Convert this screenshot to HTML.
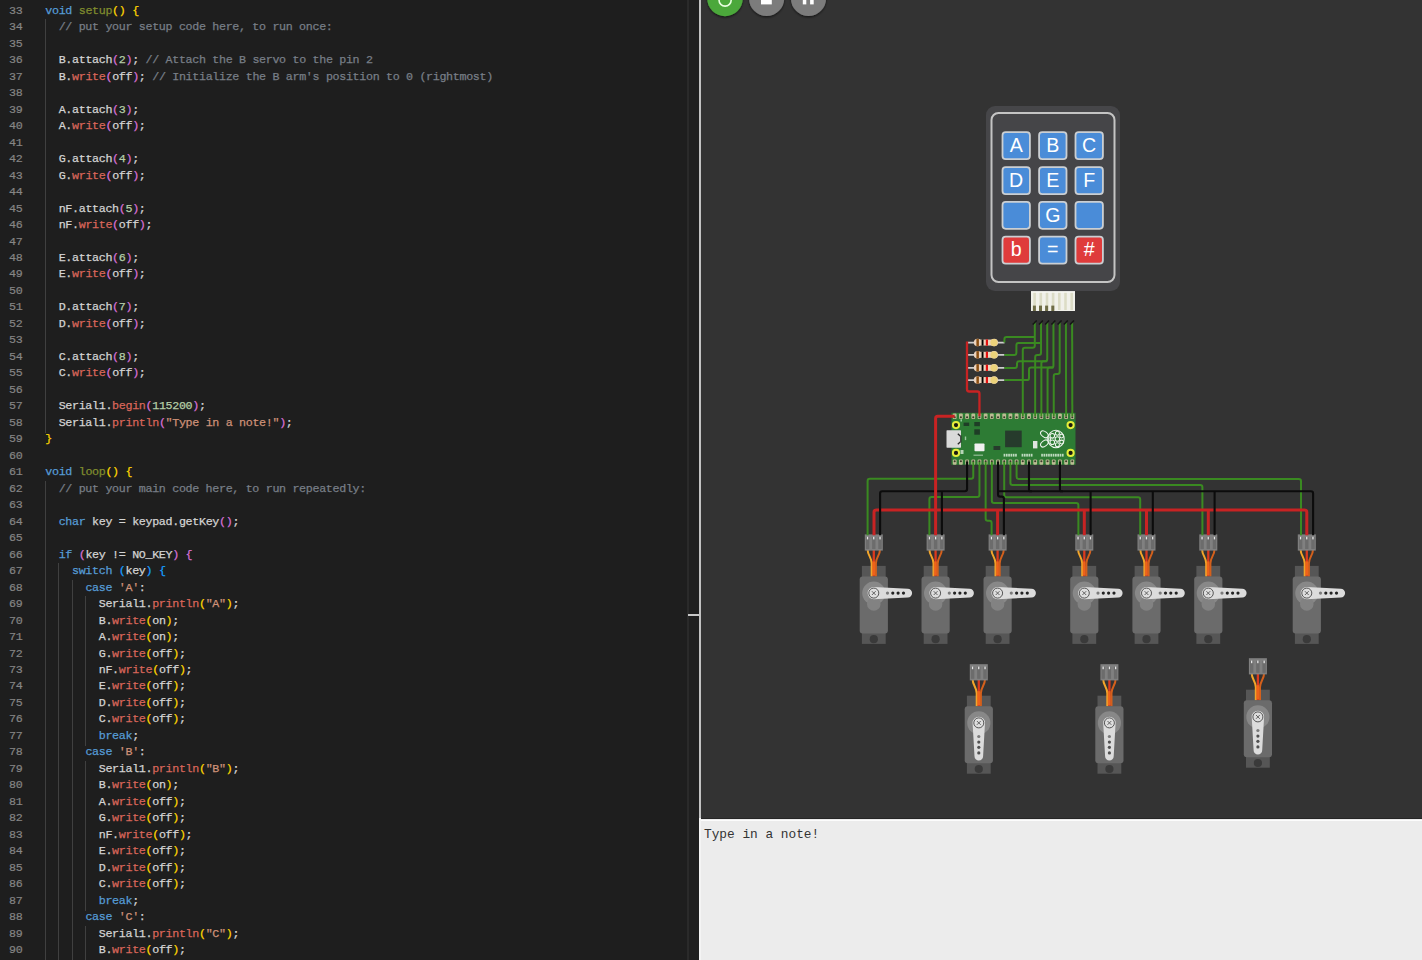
<!DOCTYPE html>
<html><head><meta charset="utf-8"><style>
html,body{margin:0;padding:0;width:1422px;height:960px;overflow:hidden;background:#1e1e1e;}
.ed{position:absolute;left:0;top:0;width:687px;height:960px;background:#1e1e1e;overflow:hidden;}
.ln{position:absolute;left:45.3px;height:16.48px;line-height:16.48px;white-space:pre;font-family:"Liberation Mono",monospace;font-size:11.7px;letter-spacing:-0.334px;color:#d4d4d4;-webkit-text-stroke:0.25px currentColor;}
.lnum{position:absolute;left:0;width:22.4px;text-align:right;height:16.48px;line-height:16.48px;font-family:"Liberation Mono",monospace;font-size:11.7px;letter-spacing:-0.334px;color:#858585;-webkit-text-stroke:0.2px currentColor;}
.gd{position:absolute;width:1px;height:18.48px;background:#404040;}
.sb1{position:absolute;left:687px;top:0;width:2px;height:960px;background:#2a2a2a;}
.sb2{position:absolute;left:689px;top:0;width:10px;height:960px;background:#1f1f1f;}
.tick{position:absolute;left:688px;top:613.5px;width:12px;height:2px;background:#c8c8c8;}
.div{position:absolute;left:699px;top:0;width:2px;height:960px;background:linear-gradient(#c2c2c2 0,#c2c2c2 818px,#f4f4f4 818px);}
.simbg{position:absolute;left:701px;top:0;width:721px;height:818px;background:#333333;}
.sim{position:absolute;left:701px;top:0;}
.serial{position:absolute;left:701px;top:818px;width:721px;height:142px;background:#ececec;border-top:1px solid #262626;box-sizing:border-box;}
.serial:before{content:'';position:absolute;left:0;top:0.5px;width:721px;height:1.6px;background:#fcfcfc;}
.stext{position:absolute;left:704px;top:827px;font-family:"Liberation Mono",monospace;font-size:12.8px;color:#333;white-space:pre;}
</style></head><body>
<div class="ed"><div class="gd" style="left:45px;top:19.28px"></div><div class="gd" style="left:45px;top:35.76px"></div><div class="gd" style="left:45px;top:52.24px"></div><div class="gd" style="left:45px;top:68.72px"></div><div class="gd" style="left:45px;top:85.20px"></div><div class="gd" style="left:45px;top:101.68px"></div><div class="gd" style="left:45px;top:118.16px"></div><div class="gd" style="left:45px;top:134.64px"></div><div class="gd" style="left:45px;top:151.12px"></div><div class="gd" style="left:45px;top:167.60px"></div><div class="gd" style="left:45px;top:184.08px"></div><div class="gd" style="left:45px;top:200.56px"></div><div class="gd" style="left:45px;top:217.04px"></div><div class="gd" style="left:45px;top:233.52px"></div><div class="gd" style="left:45px;top:250.00px"></div><div class="gd" style="left:45px;top:266.48px"></div><div class="gd" style="left:45px;top:282.96px"></div><div class="gd" style="left:45px;top:299.44px"></div><div class="gd" style="left:45px;top:315.92px"></div><div class="gd" style="left:45px;top:332.40px"></div><div class="gd" style="left:45px;top:348.88px"></div><div class="gd" style="left:45px;top:365.36px"></div><div class="gd" style="left:45px;top:381.84px"></div><div class="gd" style="left:45px;top:398.32px"></div><div class="gd" style="left:45px;top:414.80px"></div><div class="gd" style="left:45px;top:480.72px"></div><div class="gd" style="left:45px;top:497.20px"></div><div class="gd" style="left:45px;top:513.68px"></div><div class="gd" style="left:45px;top:530.16px"></div><div class="gd" style="left:45px;top:546.64px"></div><div class="gd" style="left:45px;top:563.12px"></div><div class="gd" style="left:58px;top:563.12px"></div><div class="gd" style="left:45px;top:579.60px"></div><div class="gd" style="left:58px;top:579.60px"></div><div class="gd" style="left:72px;top:579.60px"></div><div class="gd" style="left:45px;top:596.08px"></div><div class="gd" style="left:58px;top:596.08px"></div><div class="gd" style="left:72px;top:596.08px"></div><div class="gd" style="left:85px;top:596.08px"></div><div class="gd" style="left:45px;top:612.56px"></div><div class="gd" style="left:58px;top:612.56px"></div><div class="gd" style="left:72px;top:612.56px"></div><div class="gd" style="left:85px;top:612.56px"></div><div class="gd" style="left:45px;top:629.04px"></div><div class="gd" style="left:58px;top:629.04px"></div><div class="gd" style="left:72px;top:629.04px"></div><div class="gd" style="left:85px;top:629.04px"></div><div class="gd" style="left:45px;top:645.52px"></div><div class="gd" style="left:58px;top:645.52px"></div><div class="gd" style="left:72px;top:645.52px"></div><div class="gd" style="left:85px;top:645.52px"></div><div class="gd" style="left:45px;top:662.00px"></div><div class="gd" style="left:58px;top:662.00px"></div><div class="gd" style="left:72px;top:662.00px"></div><div class="gd" style="left:85px;top:662.00px"></div><div class="gd" style="left:45px;top:678.48px"></div><div class="gd" style="left:58px;top:678.48px"></div><div class="gd" style="left:72px;top:678.48px"></div><div class="gd" style="left:85px;top:678.48px"></div><div class="gd" style="left:45px;top:694.96px"></div><div class="gd" style="left:58px;top:694.96px"></div><div class="gd" style="left:72px;top:694.96px"></div><div class="gd" style="left:85px;top:694.96px"></div><div class="gd" style="left:45px;top:711.44px"></div><div class="gd" style="left:58px;top:711.44px"></div><div class="gd" style="left:72px;top:711.44px"></div><div class="gd" style="left:85px;top:711.44px"></div><div class="gd" style="left:45px;top:727.92px"></div><div class="gd" style="left:58px;top:727.92px"></div><div class="gd" style="left:72px;top:727.92px"></div><div class="gd" style="left:85px;top:727.92px"></div><div class="gd" style="left:45px;top:744.40px"></div><div class="gd" style="left:58px;top:744.40px"></div><div class="gd" style="left:72px;top:744.40px"></div><div class="gd" style="left:45px;top:760.88px"></div><div class="gd" style="left:58px;top:760.88px"></div><div class="gd" style="left:72px;top:760.88px"></div><div class="gd" style="left:85px;top:760.88px"></div><div class="gd" style="left:45px;top:777.36px"></div><div class="gd" style="left:58px;top:777.36px"></div><div class="gd" style="left:72px;top:777.36px"></div><div class="gd" style="left:85px;top:777.36px"></div><div class="gd" style="left:45px;top:793.84px"></div><div class="gd" style="left:58px;top:793.84px"></div><div class="gd" style="left:72px;top:793.84px"></div><div class="gd" style="left:85px;top:793.84px"></div><div class="gd" style="left:45px;top:810.32px"></div><div class="gd" style="left:58px;top:810.32px"></div><div class="gd" style="left:72px;top:810.32px"></div><div class="gd" style="left:85px;top:810.32px"></div><div class="gd" style="left:45px;top:826.80px"></div><div class="gd" style="left:58px;top:826.80px"></div><div class="gd" style="left:72px;top:826.80px"></div><div class="gd" style="left:85px;top:826.80px"></div><div class="gd" style="left:45px;top:843.28px"></div><div class="gd" style="left:58px;top:843.28px"></div><div class="gd" style="left:72px;top:843.28px"></div><div class="gd" style="left:85px;top:843.28px"></div><div class="gd" style="left:45px;top:859.76px"></div><div class="gd" style="left:58px;top:859.76px"></div><div class="gd" style="left:72px;top:859.76px"></div><div class="gd" style="left:85px;top:859.76px"></div><div class="gd" style="left:45px;top:876.24px"></div><div class="gd" style="left:58px;top:876.24px"></div><div class="gd" style="left:72px;top:876.24px"></div><div class="gd" style="left:85px;top:876.24px"></div><div class="gd" style="left:45px;top:892.72px"></div><div class="gd" style="left:58px;top:892.72px"></div><div class="gd" style="left:72px;top:892.72px"></div><div class="gd" style="left:85px;top:892.72px"></div><div class="gd" style="left:45px;top:909.20px"></div><div class="gd" style="left:58px;top:909.20px"></div><div class="gd" style="left:72px;top:909.20px"></div><div class="gd" style="left:45px;top:925.68px"></div><div class="gd" style="left:58px;top:925.68px"></div><div class="gd" style="left:72px;top:925.68px"></div><div class="gd" style="left:85px;top:925.68px"></div><div class="gd" style="left:45px;top:942.16px"></div><div class="gd" style="left:58px;top:942.16px"></div><div class="gd" style="left:72px;top:942.16px"></div><div class="gd" style="left:85px;top:942.16px"></div><div class="ln" style="top:2.80px"><span style="color:#569cd6">void</span> <span style="color:#808d2e">setup</span><span style="color:#ffd700">(</span><span style="color:#ffd700">)</span> <span style="color:#ffd700">{</span></div><div class="lnum" style="top:2.80px">33</div><div class="ln" style="top:19.28px">  <span style="color:#787e87">// put your setup code here, to run once:</span></div><div class="lnum" style="top:19.28px">34</div><div class="ln" style="top:35.76px">&nbsp;</div><div class="lnum" style="top:35.76px">35</div><div class="ln" style="top:52.24px">  <span style="color:#d4d4d4">B</span>.<span style="color:#d4d4d4">attach</span><span style="color:#da70d6">(</span><span style="color:#b5cea8">2</span><span style="color:#da70d6">)</span>; <span style="color:#787e87">// Attach the B servo to the pin 2</span></div><div class="lnum" style="top:52.24px">36</div><div class="ln" style="top:68.72px">  <span style="color:#d4d4d4">B</span>.<span style="color:#d9665a">write</span><span style="color:#da70d6">(</span><span style="color:#d4d4d4">off</span><span style="color:#da70d6">)</span>; <span style="color:#787e87">// Initialize the B arm&#x27;s position to 0 (rightmost)</span></div><div class="lnum" style="top:68.72px">37</div><div class="ln" style="top:85.20px">&nbsp;</div><div class="lnum" style="top:85.20px">38</div><div class="ln" style="top:101.68px">  <span style="color:#d4d4d4">A</span>.<span style="color:#d4d4d4">attach</span><span style="color:#da70d6">(</span><span style="color:#b5cea8">3</span><span style="color:#da70d6">)</span>;</div><div class="lnum" style="top:101.68px">39</div><div class="ln" style="top:118.16px">  <span style="color:#d4d4d4">A</span>.<span style="color:#d9665a">write</span><span style="color:#da70d6">(</span><span style="color:#d4d4d4">off</span><span style="color:#da70d6">)</span>;</div><div class="lnum" style="top:118.16px">40</div><div class="ln" style="top:134.64px">&nbsp;</div><div class="lnum" style="top:134.64px">41</div><div class="ln" style="top:151.12px">  <span style="color:#d4d4d4">G</span>.<span style="color:#d4d4d4">attach</span><span style="color:#da70d6">(</span><span style="color:#b5cea8">4</span><span style="color:#da70d6">)</span>;</div><div class="lnum" style="top:151.12px">42</div><div class="ln" style="top:167.60px">  <span style="color:#d4d4d4">G</span>.<span style="color:#d9665a">write</span><span style="color:#da70d6">(</span><span style="color:#d4d4d4">off</span><span style="color:#da70d6">)</span>;</div><div class="lnum" style="top:167.60px">43</div><div class="ln" style="top:184.08px">&nbsp;</div><div class="lnum" style="top:184.08px">44</div><div class="ln" style="top:200.56px">  <span style="color:#d4d4d4">nF</span>.<span style="color:#d4d4d4">attach</span><span style="color:#da70d6">(</span><span style="color:#b5cea8">5</span><span style="color:#da70d6">)</span>;</div><div class="lnum" style="top:200.56px">45</div><div class="ln" style="top:217.04px">  <span style="color:#d4d4d4">nF</span>.<span style="color:#d9665a">write</span><span style="color:#da70d6">(</span><span style="color:#d4d4d4">off</span><span style="color:#da70d6">)</span>;</div><div class="lnum" style="top:217.04px">46</div><div class="ln" style="top:233.52px">&nbsp;</div><div class="lnum" style="top:233.52px">47</div><div class="ln" style="top:250.00px">  <span style="color:#d4d4d4">E</span>.<span style="color:#d4d4d4">attach</span><span style="color:#da70d6">(</span><span style="color:#b5cea8">6</span><span style="color:#da70d6">)</span>;</div><div class="lnum" style="top:250.00px">48</div><div class="ln" style="top:266.48px">  <span style="color:#d4d4d4">E</span>.<span style="color:#d9665a">write</span><span style="color:#da70d6">(</span><span style="color:#d4d4d4">off</span><span style="color:#da70d6">)</span>;</div><div class="lnum" style="top:266.48px">49</div><div class="ln" style="top:282.96px">&nbsp;</div><div class="lnum" style="top:282.96px">50</div><div class="ln" style="top:299.44px">  <span style="color:#d4d4d4">D</span>.<span style="color:#d4d4d4">attach</span><span style="color:#da70d6">(</span><span style="color:#b5cea8">7</span><span style="color:#da70d6">)</span>;</div><div class="lnum" style="top:299.44px">51</div><div class="ln" style="top:315.92px">  <span style="color:#d4d4d4">D</span>.<span style="color:#d9665a">write</span><span style="color:#da70d6">(</span><span style="color:#d4d4d4">off</span><span style="color:#da70d6">)</span>;</div><div class="lnum" style="top:315.92px">52</div><div class="ln" style="top:332.40px">&nbsp;</div><div class="lnum" style="top:332.40px">53</div><div class="ln" style="top:348.88px">  <span style="color:#d4d4d4">C</span>.<span style="color:#d4d4d4">attach</span><span style="color:#da70d6">(</span><span style="color:#b5cea8">8</span><span style="color:#da70d6">)</span>;</div><div class="lnum" style="top:348.88px">54</div><div class="ln" style="top:365.36px">  <span style="color:#d4d4d4">C</span>.<span style="color:#d9665a">write</span><span style="color:#da70d6">(</span><span style="color:#d4d4d4">off</span><span style="color:#da70d6">)</span>;</div><div class="lnum" style="top:365.36px">55</div><div class="ln" style="top:381.84px">&nbsp;</div><div class="lnum" style="top:381.84px">56</div><div class="ln" style="top:398.32px">  <span style="color:#d4d4d4">Serial1</span>.<span style="color:#d9665a">begin</span><span style="color:#da70d6">(</span><span style="color:#b5cea8">115200</span><span style="color:#da70d6">)</span>;</div><div class="lnum" style="top:398.32px">57</div><div class="ln" style="top:414.80px">  <span style="color:#d4d4d4">Serial1</span>.<span style="color:#d9665a">println</span><span style="color:#da70d6">(</span><span style="color:#ce9178">&quot;Type in a note!&quot;</span><span style="color:#da70d6">)</span>;</div><div class="lnum" style="top:414.80px">58</div><div class="ln" style="top:431.28px"><span style="color:#ffd700">}</span></div><div class="lnum" style="top:431.28px">59</div><div class="ln" style="top:447.76px">&nbsp;</div><div class="lnum" style="top:447.76px">60</div><div class="ln" style="top:464.24px"><span style="color:#569cd6">void</span> <span style="color:#808d2e">loop</span><span style="color:#ffd700">(</span><span style="color:#ffd700">)</span> <span style="color:#ffd700">{</span></div><div class="lnum" style="top:464.24px">61</div><div class="ln" style="top:480.72px">  <span style="color:#787e87">// put your main code here, to run repeatedly:</span></div><div class="lnum" style="top:480.72px">62</div><div class="ln" style="top:497.20px">&nbsp;</div><div class="lnum" style="top:497.20px">63</div><div class="ln" style="top:513.68px">  <span style="color:#569cd6">char</span> <span style="color:#d4d4d4">key</span> = <span style="color:#d4d4d4">keypad</span>.<span style="color:#d4d4d4">getKey</span><span style="color:#da70d6">(</span><span style="color:#da70d6">)</span>;</div><div class="lnum" style="top:513.68px">64</div><div class="ln" style="top:530.16px">&nbsp;</div><div class="lnum" style="top:530.16px">65</div><div class="ln" style="top:546.64px">  <span style="color:#569cd6">if</span> <span style="color:#da70d6">(</span><span style="color:#d4d4d4">key</span> != <span style="color:#d4d4d4">NO_KEY</span><span style="color:#da70d6">)</span> <span style="color:#da70d6">{</span></div><div class="lnum" style="top:546.64px">66</div><div class="ln" style="top:563.12px">    <span style="color:#569cd6">switch</span> <span style="color:#179fff">(</span><span style="color:#d4d4d4">key</span><span style="color:#179fff">)</span> <span style="color:#179fff">{</span></div><div class="lnum" style="top:563.12px">67</div><div class="ln" style="top:579.60px">      <span style="color:#569cd6">case</span> <span style="color:#ce9178">&#x27;A&#x27;</span>:</div><div class="lnum" style="top:579.60px">68</div><div class="ln" style="top:596.08px">        <span style="color:#d4d4d4">Serial1</span>.<span style="color:#d9665a">println</span><span style="color:#ffd700">(</span><span style="color:#ce9178">&quot;A&quot;</span><span style="color:#ffd700">)</span>;</div><div class="lnum" style="top:596.08px">69</div><div class="ln" style="top:612.56px">        <span style="color:#d4d4d4">B</span>.<span style="color:#d9665a">write</span><span style="color:#ffd700">(</span><span style="color:#d4d4d4">on</span><span style="color:#ffd700">)</span>;</div><div class="lnum" style="top:612.56px">70</div><div class="ln" style="top:629.04px">        <span style="color:#d4d4d4">A</span>.<span style="color:#d9665a">write</span><span style="color:#ffd700">(</span><span style="color:#d4d4d4">on</span><span style="color:#ffd700">)</span>;</div><div class="lnum" style="top:629.04px">71</div><div class="ln" style="top:645.52px">        <span style="color:#d4d4d4">G</span>.<span style="color:#d9665a">write</span><span style="color:#ffd700">(</span><span style="color:#d4d4d4">off</span><span style="color:#ffd700">)</span>;</div><div class="lnum" style="top:645.52px">72</div><div class="ln" style="top:662.00px">        <span style="color:#d4d4d4">nF</span>.<span style="color:#d9665a">write</span><span style="color:#ffd700">(</span><span style="color:#d4d4d4">off</span><span style="color:#ffd700">)</span>;</div><div class="lnum" style="top:662.00px">73</div><div class="ln" style="top:678.48px">        <span style="color:#d4d4d4">E</span>.<span style="color:#d9665a">write</span><span style="color:#ffd700">(</span><span style="color:#d4d4d4">off</span><span style="color:#ffd700">)</span>;</div><div class="lnum" style="top:678.48px">74</div><div class="ln" style="top:694.96px">        <span style="color:#d4d4d4">D</span>.<span style="color:#d9665a">write</span><span style="color:#ffd700">(</span><span style="color:#d4d4d4">off</span><span style="color:#ffd700">)</span>;</div><div class="lnum" style="top:694.96px">75</div><div class="ln" style="top:711.44px">        <span style="color:#d4d4d4">C</span>.<span style="color:#d9665a">write</span><span style="color:#ffd700">(</span><span style="color:#d4d4d4">off</span><span style="color:#ffd700">)</span>;</div><div class="lnum" style="top:711.44px">76</div><div class="ln" style="top:727.92px">        <span style="color:#569cd6">break</span>;</div><div class="lnum" style="top:727.92px">77</div><div class="ln" style="top:744.40px">      <span style="color:#569cd6">case</span> <span style="color:#ce9178">&#x27;B&#x27;</span>:</div><div class="lnum" style="top:744.40px">78</div><div class="ln" style="top:760.88px">        <span style="color:#d4d4d4">Serial1</span>.<span style="color:#d9665a">println</span><span style="color:#ffd700">(</span><span style="color:#ce9178">&quot;B&quot;</span><span style="color:#ffd700">)</span>;</div><div class="lnum" style="top:760.88px">79</div><div class="ln" style="top:777.36px">        <span style="color:#d4d4d4">B</span>.<span style="color:#d9665a">write</span><span style="color:#ffd700">(</span><span style="color:#d4d4d4">on</span><span style="color:#ffd700">)</span>;</div><div class="lnum" style="top:777.36px">80</div><div class="ln" style="top:793.84px">        <span style="color:#d4d4d4">A</span>.<span style="color:#d9665a">write</span><span style="color:#ffd700">(</span><span style="color:#d4d4d4">off</span><span style="color:#ffd700">)</span>;</div><div class="lnum" style="top:793.84px">81</div><div class="ln" style="top:810.32px">        <span style="color:#d4d4d4">G</span>.<span style="color:#d9665a">write</span><span style="color:#ffd700">(</span><span style="color:#d4d4d4">off</span><span style="color:#ffd700">)</span>;</div><div class="lnum" style="top:810.32px">82</div><div class="ln" style="top:826.80px">        <span style="color:#d4d4d4">nF</span>.<span style="color:#d9665a">write</span><span style="color:#ffd700">(</span><span style="color:#d4d4d4">off</span><span style="color:#ffd700">)</span>;</div><div class="lnum" style="top:826.80px">83</div><div class="ln" style="top:843.28px">        <span style="color:#d4d4d4">E</span>.<span style="color:#d9665a">write</span><span style="color:#ffd700">(</span><span style="color:#d4d4d4">off</span><span style="color:#ffd700">)</span>;</div><div class="lnum" style="top:843.28px">84</div><div class="ln" style="top:859.76px">        <span style="color:#d4d4d4">D</span>.<span style="color:#d9665a">write</span><span style="color:#ffd700">(</span><span style="color:#d4d4d4">off</span><span style="color:#ffd700">)</span>;</div><div class="lnum" style="top:859.76px">85</div><div class="ln" style="top:876.24px">        <span style="color:#d4d4d4">C</span>.<span style="color:#d9665a">write</span><span style="color:#ffd700">(</span><span style="color:#d4d4d4">off</span><span style="color:#ffd700">)</span>;</div><div class="lnum" style="top:876.24px">86</div><div class="ln" style="top:892.72px">        <span style="color:#569cd6">break</span>;</div><div class="lnum" style="top:892.72px">87</div><div class="ln" style="top:909.20px">      <span style="color:#569cd6">case</span> <span style="color:#ce9178">&#x27;C&#x27;</span>:</div><div class="lnum" style="top:909.20px">88</div><div class="ln" style="top:925.68px">        <span style="color:#d4d4d4">Serial1</span>.<span style="color:#d9665a">println</span><span style="color:#ffd700">(</span><span style="color:#ce9178">&quot;C&quot;</span><span style="color:#ffd700">)</span>;</div><div class="lnum" style="top:925.68px">89</div><div class="ln" style="top:942.16px">        <span style="color:#d4d4d4">B</span>.<span style="color:#d9665a">write</span><span style="color:#ffd700">(</span><span style="color:#d4d4d4">off</span><span style="color:#ffd700">)</span>;</div><div class="lnum" style="top:942.16px">90</div></div>
<div class="sb2"></div><div class="sb1"></div><div class="tick"></div>
<div class="div"></div>
<div class="simbg"></div>
<svg class="sim" width="721" height="818" viewBox="701 0 721 818"><defs><filter id="shd" x="-50%" y="-50%" width="200%" height="200%"><feDropShadow dx="0" dy="1.2" stdDeviation="1.2" flood-color="#000" flood-opacity="0.6"/></filter></defs><circle cx="725" cy="-1.6" r="17.8" fill="#4ca83b" filter="url(#shd)"/><circle cx="725.1" cy="0" r="6.1" fill="none" stroke="#e8ffe0" stroke-width="1.6"/><circle cx="766.6" cy="-1.6" r="17.6" fill="#7b7b7b" filter="url(#shd)"/><rect x="761" y="-7" width="10.8" height="11.4" fill="#fff"/><circle cx="808.5" cy="-1.6" r="17.6" fill="#7b7b7b" filter="url(#shd)"/><rect x="802.8" y="-7" width="3.5" height="11.4" fill="#fff"/><rect x="810.1" y="-7" width="3.6" height="11.4" fill="#fff"/><rect x="986" y="106" width="134" height="185" rx="9" fill="#464649"/><rect x="991.5" y="113" width="123" height="169" rx="7" fill="#454548" stroke="#c4c4c4" stroke-width="2"/><rect x="1002.5" y="132.1" width="27.4" height="27.0" rx="3.2" fill="#4a8cd8" stroke="#cbcfd3" stroke-width="1.8"/><text x="1016.2" y="151.8" font-family="Liberation Sans" font-size="19.6" fill="#fff" text-anchor="middle">A</text><rect x="1039.1" y="132.1" width="27.4" height="27.0" rx="3.2" fill="#4a8cd8" stroke="#cbcfd3" stroke-width="1.8"/><text x="1052.8" y="151.8" font-family="Liberation Sans" font-size="19.6" fill="#fff" text-anchor="middle">B</text><rect x="1075.5" y="132.1" width="27.4" height="27.0" rx="3.2" fill="#4a8cd8" stroke="#cbcfd3" stroke-width="1.8"/><text x="1089.2" y="151.8" font-family="Liberation Sans" font-size="19.6" fill="#fff" text-anchor="middle">C</text><rect x="1002.5" y="167.1" width="27.4" height="27.0" rx="3.2" fill="#4a8cd8" stroke="#cbcfd3" stroke-width="1.8"/><text x="1016.2" y="186.8" font-family="Liberation Sans" font-size="19.6" fill="#fff" text-anchor="middle">D</text><rect x="1039.1" y="167.1" width="27.4" height="27.0" rx="3.2" fill="#4a8cd8" stroke="#cbcfd3" stroke-width="1.8"/><text x="1052.8" y="186.8" font-family="Liberation Sans" font-size="19.6" fill="#fff" text-anchor="middle">E</text><rect x="1075.5" y="167.1" width="27.4" height="27.0" rx="3.2" fill="#4a8cd8" stroke="#cbcfd3" stroke-width="1.8"/><text x="1089.2" y="186.8" font-family="Liberation Sans" font-size="19.6" fill="#fff" text-anchor="middle">F</text><rect x="1002.5" y="201.8" width="27.4" height="27.0" rx="3.2" fill="#4a8cd8" stroke="#cbcfd3" stroke-width="1.8"/><rect x="1039.1" y="201.8" width="27.4" height="27.0" rx="3.2" fill="#4a8cd8" stroke="#cbcfd3" stroke-width="1.8"/><text x="1052.8" y="221.5" font-family="Liberation Sans" font-size="19.6" fill="#fff" text-anchor="middle">G</text><rect x="1075.5" y="201.8" width="27.4" height="27.0" rx="3.2" fill="#4a8cd8" stroke="#cbcfd3" stroke-width="1.8"/><rect x="1002.5" y="236.7" width="27.4" height="27.0" rx="3.2" fill="#df3b3b" stroke="#cbcfd3" stroke-width="1.8"/><text x="1016.2" y="256.4" font-family="Liberation Sans" font-size="19.6" fill="#fff" text-anchor="middle">b</text><rect x="1039.1" y="236.7" width="27.4" height="27.0" rx="3.2" fill="#4a8cd8" stroke="#cbcfd3" stroke-width="1.8"/><text x="1052.8" y="256.4" font-family="Liberation Sans" font-size="19.6" fill="#fff" text-anchor="middle">=</text><rect x="1075.5" y="236.7" width="27.4" height="27.0" rx="3.2" fill="#df3b3b" stroke="#cbcfd3" stroke-width="1.8"/><text x="1089.2" y="256.4" font-family="Liberation Sans" font-size="19.6" fill="#fff" text-anchor="middle">#</text><rect x="1031" y="291.3" width="44" height="19.7" fill="#f1f1ea"/><rect x="1033.3" y="292.5" width="2.6" height="17.5" fill="#dcdcc6"/><rect x="1039.5" y="292.5" width="2.6" height="17.5" fill="#dcdcc6"/><rect x="1045.7" y="292.5" width="2.6" height="17.5" fill="#dcdcc6"/><rect x="1051.8" y="292.5" width="2.6" height="17.5" fill="#dcdcc6"/><rect x="1058.0" y="292.5" width="2.6" height="17.5" fill="#dcdcc6"/><rect x="1064.2" y="292.5" width="2.6" height="17.5" fill="#dcdcc6"/><rect x="1070.4" y="292.5" width="2.6" height="17.5" fill="#dcdcc6"/><rect x="1032.9" y="305.6" width="3.0" height="5.4" fill="#6e6c45"/><rect x="1039.0" y="305.6" width="3.0" height="5.4" fill="#6e6c45"/><rect x="1045.1" y="305.6" width="3.0" height="5.4" fill="#6e6c45"/><rect x="1051.3" y="305.6" width="3.0" height="5.4" fill="#6e6c45"/><rect x="1031" y="291.3" width="44" height="1.2" fill="#fbfbf7"/><line x1="967.8" y1="342.55" x2="1004.5" y2="342.55" stroke="#cdcdcd" stroke-width="1.8"/><circle cx="977.6" cy="342.55" r="3.8" fill="#ecd3bd"/><circle cx="994.2" cy="342.55" r="3.8" fill="#ecd3bd"/><rect x="977.6" y="339.55" width="16.6" height="6.0" fill="#ecd3bd"/><rect x="976.4" y="338.85" width="2.5" height="7.4" fill="#8a4e12"/><rect x="981.6" y="339.45" width="1.9" height="6.2" fill="#000"/><rect x="985.8" y="339.45" width="2.2" height="6.2" fill="#e41010"/><circle cx="994" cy="342.55" r="3.6" fill="#ecd27a"/><line x1="967.8" y1="354.80" x2="1004.5" y2="354.80" stroke="#cdcdcd" stroke-width="1.8"/><circle cx="977.6" cy="354.80" r="3.8" fill="#ecd3bd"/><circle cx="994.2" cy="354.80" r="3.8" fill="#ecd3bd"/><rect x="977.6" y="351.80" width="16.6" height="6.0" fill="#ecd3bd"/><rect x="976.4" y="351.10" width="2.5" height="7.4" fill="#8a4e12"/><rect x="981.6" y="351.70" width="1.9" height="6.2" fill="#000"/><rect x="985.8" y="351.70" width="2.2" height="6.2" fill="#e41010"/><circle cx="994" cy="354.80" r="3.6" fill="#ecd27a"/><line x1="967.8" y1="367.80" x2="1004.5" y2="367.80" stroke="#cdcdcd" stroke-width="1.8"/><circle cx="977.6" cy="367.80" r="3.8" fill="#ecd3bd"/><circle cx="994.2" cy="367.80" r="3.8" fill="#ecd3bd"/><rect x="977.6" y="364.80" width="16.6" height="6.0" fill="#ecd3bd"/><rect x="976.4" y="364.10" width="2.5" height="7.4" fill="#8a4e12"/><rect x="981.6" y="364.70" width="1.9" height="6.2" fill="#000"/><rect x="985.8" y="364.70" width="2.2" height="6.2" fill="#e41010"/><circle cx="994" cy="367.80" r="3.6" fill="#ecd27a"/><line x1="967.8" y1="380.05" x2="1004.5" y2="380.05" stroke="#cdcdcd" stroke-width="1.8"/><circle cx="977.6" cy="380.05" r="3.8" fill="#ecd3bd"/><circle cx="994.2" cy="380.05" r="3.8" fill="#ecd3bd"/><rect x="977.6" y="377.05" width="16.6" height="6.0" fill="#ecd3bd"/><rect x="976.4" y="376.35" width="2.5" height="7.4" fill="#8a4e12"/><rect x="981.6" y="376.95" width="1.9" height="6.2" fill="#000"/><rect x="985.8" y="376.95" width="2.2" height="6.2" fill="#e41010"/><circle cx="994" cy="380.05" r="3.6" fill="#ecd27a"/><rect x="951.5" y="412.8" width="124" height="52" fill="#2d7b34"/><rect x="952.80" y="413.60" width="3.8" height="5.4" rx="1" fill="#bcbb94"/><circle cx="954.70" cy="417.20" r="1.05" fill="#3a3a2a"/><rect x="952.80" y="459.40" width="3.8" height="5.4" rx="1" fill="#bcbb94"/><circle cx="954.70" cy="461.20" r="1.05" fill="#3a3a2a"/><rect x="958.99" y="413.60" width="3.8" height="5.4" rx="1" fill="#bcbb94"/><circle cx="960.89" cy="417.20" r="1.05" fill="#3a3a2a"/><rect x="958.99" y="459.40" width="3.8" height="5.4" rx="1" fill="#bcbb94"/><circle cx="960.89" cy="461.20" r="1.05" fill="#3a3a2a"/><rect x="965.18" y="413.60" width="3.8" height="5.4" rx="1" fill="#bcbb94"/><circle cx="967.08" cy="417.20" r="1.05" fill="#3a3a2a"/><rect x="965.18" y="459.40" width="3.8" height="5.4" rx="1" fill="#bcbb94"/><circle cx="967.08" cy="461.20" r="1.05" fill="#3a3a2a"/><rect x="971.37" y="413.60" width="3.8" height="5.4" rx="1" fill="#bcbb94"/><circle cx="973.27" cy="417.20" r="1.05" fill="#3a3a2a"/><rect x="971.37" y="459.40" width="3.8" height="5.4" rx="1" fill="#bcbb94"/><circle cx="973.27" cy="461.20" r="1.05" fill="#3a3a2a"/><rect x="977.56" y="413.60" width="3.8" height="5.4" rx="1" fill="#bcbb94"/><circle cx="979.46" cy="417.20" r="1.05" fill="#3a3a2a"/><rect x="977.56" y="459.40" width="3.8" height="5.4" rx="1" fill="#bcbb94"/><circle cx="979.46" cy="461.20" r="1.05" fill="#3a3a2a"/><rect x="983.75" y="413.60" width="3.8" height="5.4" rx="1" fill="#bcbb94"/><circle cx="985.65" cy="417.20" r="1.05" fill="#3a3a2a"/><rect x="983.75" y="459.40" width="3.8" height="5.4" rx="1" fill="#bcbb94"/><circle cx="985.65" cy="461.20" r="1.05" fill="#3a3a2a"/><rect x="989.94" y="413.60" width="3.8" height="5.4" rx="1" fill="#bcbb94"/><circle cx="991.84" cy="417.20" r="1.05" fill="#3a3a2a"/><rect x="989.94" y="459.40" width="3.8" height="5.4" rx="1" fill="#bcbb94"/><circle cx="991.84" cy="461.20" r="1.05" fill="#3a3a2a"/><rect x="996.13" y="413.60" width="3.8" height="5.4" rx="1" fill="#bcbb94"/><circle cx="998.03" cy="417.20" r="1.05" fill="#3a3a2a"/><rect x="996.13" y="459.40" width="3.8" height="5.4" rx="1" fill="#bcbb94"/><circle cx="998.03" cy="461.20" r="1.05" fill="#3a3a2a"/><rect x="1002.32" y="413.60" width="3.8" height="5.4" rx="1" fill="#bcbb94"/><circle cx="1004.22" cy="417.20" r="1.05" fill="#3a3a2a"/><rect x="1002.32" y="459.40" width="3.8" height="5.4" rx="1" fill="#bcbb94"/><circle cx="1004.22" cy="461.20" r="1.05" fill="#3a3a2a"/><rect x="1008.51" y="413.60" width="3.8" height="5.4" rx="1" fill="#bcbb94"/><circle cx="1010.41" cy="417.20" r="1.05" fill="#3a3a2a"/><rect x="1008.51" y="459.40" width="3.8" height="5.4" rx="1" fill="#bcbb94"/><circle cx="1010.41" cy="461.20" r="1.05" fill="#3a3a2a"/><rect x="1014.70" y="413.60" width="3.8" height="5.4" rx="1" fill="#bcbb94"/><circle cx="1016.60" cy="417.20" r="1.05" fill="#3a3a2a"/><rect x="1014.70" y="459.40" width="3.8" height="5.4" rx="1" fill="#bcbb94"/><circle cx="1016.60" cy="461.20" r="1.05" fill="#3a3a2a"/><rect x="1020.89" y="413.60" width="3.8" height="5.4" rx="1" fill="#bcbb94"/><circle cx="1022.79" cy="417.20" r="1.05" fill="#3a3a2a"/><rect x="1020.89" y="459.40" width="3.8" height="5.4" rx="1" fill="#bcbb94"/><circle cx="1022.79" cy="461.20" r="1.05" fill="#3a3a2a"/><rect x="1027.08" y="413.60" width="3.8" height="5.4" rx="1" fill="#bcbb94"/><circle cx="1028.98" cy="417.20" r="1.05" fill="#3a3a2a"/><rect x="1027.08" y="459.40" width="3.8" height="5.4" rx="1" fill="#bcbb94"/><circle cx="1028.98" cy="461.20" r="1.05" fill="#3a3a2a"/><rect x="1033.27" y="413.60" width="3.8" height="5.4" rx="1" fill="#bcbb94"/><circle cx="1035.17" cy="417.20" r="1.05" fill="#3a3a2a"/><rect x="1033.27" y="459.40" width="3.8" height="5.4" rx="1" fill="#bcbb94"/><circle cx="1035.17" cy="461.20" r="1.05" fill="#3a3a2a"/><rect x="1039.46" y="413.60" width="3.8" height="5.4" rx="1" fill="#bcbb94"/><circle cx="1041.36" cy="417.20" r="1.05" fill="#3a3a2a"/><rect x="1039.46" y="459.40" width="3.8" height="5.4" rx="1" fill="#bcbb94"/><circle cx="1041.36" cy="461.20" r="1.05" fill="#3a3a2a"/><rect x="1045.65" y="413.60" width="3.8" height="5.4" rx="1" fill="#bcbb94"/><circle cx="1047.55" cy="417.20" r="1.05" fill="#3a3a2a"/><rect x="1045.65" y="459.40" width="3.8" height="5.4" rx="1" fill="#bcbb94"/><circle cx="1047.55" cy="461.20" r="1.05" fill="#3a3a2a"/><rect x="1051.84" y="413.60" width="3.8" height="5.4" rx="1" fill="#bcbb94"/><circle cx="1053.74" cy="417.20" r="1.05" fill="#3a3a2a"/><rect x="1051.84" y="459.40" width="3.8" height="5.4" rx="1" fill="#bcbb94"/><circle cx="1053.74" cy="461.20" r="1.05" fill="#3a3a2a"/><rect x="1058.03" y="413.60" width="3.8" height="5.4" rx="1" fill="#bcbb94"/><circle cx="1059.93" cy="417.20" r="1.05" fill="#3a3a2a"/><rect x="1058.03" y="459.40" width="3.8" height="5.4" rx="1" fill="#bcbb94"/><circle cx="1059.93" cy="461.20" r="1.05" fill="#3a3a2a"/><rect x="1064.22" y="413.60" width="3.8" height="5.4" rx="1" fill="#bcbb94"/><circle cx="1066.12" cy="417.20" r="1.05" fill="#3a3a2a"/><rect x="1064.22" y="459.40" width="3.8" height="5.4" rx="1" fill="#bcbb94"/><circle cx="1066.12" cy="461.20" r="1.05" fill="#3a3a2a"/><rect x="1070.41" y="413.60" width="3.8" height="5.4" rx="1" fill="#bcbb94"/><circle cx="1072.31" cy="417.20" r="1.05" fill="#3a3a2a"/><rect x="1070.41" y="459.40" width="3.8" height="5.4" rx="1" fill="#bcbb94"/><circle cx="1072.31" cy="461.20" r="1.05" fill="#3a3a2a"/><circle cx="956.0" cy="425.1" r="3.1" fill="#1a1a10" stroke="#e6ee3a" stroke-width="2"/><circle cx="956.0" cy="452.9" r="3.1" fill="#1a1a10" stroke="#e6ee3a" stroke-width="2"/><circle cx="1070.6" cy="425.1" r="3.1" fill="#1a1a10" stroke="#e6ee3a" stroke-width="2"/><circle cx="1070.6" cy="452.9" r="3.1" fill="#1a1a10" stroke="#e6ee3a" stroke-width="2"/><rect x="946.5" y="430.3" width="14.5" height="17.4" rx="0.6" fill="#dadada"/><path d="M957.8 433.8 l2.4 2.2 M957.8 444.2 l2.4 -2.2" stroke="#2a2a2a" stroke-width="1.3"/><rect x="960.2" y="435.5" width="1.2" height="7" fill="#2a2a2a"/><rect x="963.6" y="422.6" width="5.6" height="3.4" fill="#1e3d26"/><rect x="974.3" y="422.0" width="5.6" height="4.2" fill="#1e3d26"/><rect x="974.3" y="429.3" width="5.6" height="5.4" fill="#1e3d26"/><rect x="960.5" y="419.3" width="1.4" height="2.2" fill="#9fd6a8"/><rect x="964.8" y="436.5" width="1.4" height="3.6" fill="#cfe8cf" opacity="0.7"/><rect x="974.5" y="443.5" width="10" height="7.8" rx="0.8" fill="#f0f0f0"/><rect x="1005.1" y="430.6" width="16.6" height="16.6" fill="#263b2c"/><rect x="993.5" y="446" width="6.8" height="4" fill="#263b2c"/><rect x="1033" y="441" width="4.4" height="7.4" fill="#e0e4e0"/><rect x="960.5" y="450" width="3" height="4" fill="#d8ecd8" opacity="0.8"/><g fill="none" stroke="#eef5ee" stroke-width="1.05"><ellipse cx="1044.4" cy="434.3" rx="4.3" ry="2.7" transform="rotate(38 1044.4 434.3)"/><ellipse cx="1044.4" cy="443.5" rx="4.3" ry="2.7" transform="rotate(-38 1044.4 443.5)"/><ellipse cx="1056.0" cy="439.0" rx="8.2" ry="8.8"/><circle cx="1052.3" cy="435.8" r="2.3"/><circle cx="1052.3" cy="442.2" r="2.3"/><circle cx="1057.4" cy="439.0" r="2.3"/><circle cx="1057.4" cy="433.2" r="2.0"/><circle cx="1057.4" cy="444.8" r="2.0"/><circle cx="1061.6" cy="436.0" r="1.9"/><circle cx="1061.6" cy="442.0" r="1.9"/><circle cx="1049.3" cy="439.0" r="1.3"/></g><g fill="#d8ead8" opacity="0.85"><rect x="1003.6" y="453.8" width="1.7" height="2.8"/><rect x="1005.9" y="453.8" width="1.7" height="2.8"/><rect x="1008.2" y="453.8" width="1.7" height="2.8"/><rect x="1010.5" y="453.8" width="1.7" height="2.8"/><rect x="1012.8" y="453.8" width="1.7" height="2.8"/><rect x="1015.1" y="453.8" width="1.7" height="2.8"/><rect x="1021.6" y="453.8" width="1.7" height="2.8"/><rect x="1023.9" y="453.8" width="1.7" height="2.8"/><rect x="1026.2" y="453.8" width="1.7" height="2.8"/><rect x="1028.5" y="453.8" width="1.7" height="2.8"/><rect x="1030.8" y="453.8" width="1.7" height="2.8"/><rect x="1041.2" y="453.8" width="1.7" height="2.8"/><rect x="1043.5" y="453.8" width="1.7" height="2.8"/><rect x="1045.8" y="453.8" width="1.7" height="2.8"/><rect x="1048.1" y="453.8" width="1.7" height="2.8"/><rect x="1050.4" y="453.8" width="1.7" height="2.8"/><rect x="1052.7" y="453.8" width="1.7" height="2.8"/><rect x="1055.0" y="453.8" width="1.7" height="2.8"/><rect x="1057.3" y="453.8" width="1.7" height="2.8"/><rect x="1059.6" y="453.8" width="1.7" height="2.8"/><rect x="1061.9" y="453.8" width="1.7" height="2.8"/></g><rect x="973.5" y="454.6" width="9.5" height="1.2" fill="#d8ead8" opacity="0.6"/><rect x="861.9" y="565.9" width="23.8" height="78" fill="#565656"/><circle cx="873.8" cy="639.2" r="4.1" fill="#3a3a3a"/><path d="M867.6 549.4 C867.6 555.4 871.7 557.4 871.7 563.4 L871.7 576.4" fill="none" stroke="#f3a52a" stroke-width="2"/><path d="M880.0 549.4 C880.0 555.4 875.9 557.4 875.9 563.4 L875.9 576.4" fill="none" stroke="#d4601c" stroke-width="2"/><line x1="873.8" y1="549.4" x2="873.8" y2="576.4" stroke="#dc3a1e" stroke-width="2.3"/><rect x="872.0" y="561.4" width="3" height="14" fill="#f4701a" opacity="0.75"/><rect x="864.8" y="534.4" width="18" height="16.2" fill="#808080"/><rect x="865.9" y="537.0" width="3.4" height="12" fill="#6c6c6c"/><rect x="866.9" y="536.8" width="1.3" height="2.6" fill="#e6e6e6"/><rect x="872.1" y="537.0" width="3.4" height="12" fill="#6c6c6c"/><rect x="873.1" y="536.8" width="1.3" height="2.6" fill="#e6e6e6"/><rect x="878.3" y="537.0" width="3.4" height="12" fill="#6c6c6c"/><rect x="879.4" y="536.8" width="1.3" height="2.6" fill="#e6e6e6"/><rect x="859.7" y="576.4" width="28.2" height="57" rx="3" fill="#6b6b6b"/><circle cx="873.8" cy="593.1" r="11.6" fill="#888888"/><circle cx="873.8" cy="603.9" r="6.8" fill="#828282"/><path d="M873.8 586.9 L907.8 588.8 A4.3 4.3 0 0 1 907.8 597.4 L873.8 599.3 A6.2 6.2 0 0 1 873.8 586.9 Z" fill="#dcdcdc"/><circle cx="887.5" cy="593.1" r="1.6" fill="#7a7a7a"/><circle cx="892.8" cy="593.1" r="1.6" fill="#222"/><circle cx="898.1" cy="593.1" r="1.6" fill="#222"/><circle cx="903.5" cy="593.1" r="1.6" fill="#222"/><circle cx="873.8" cy="593.1" r="5.0" fill="#dedede" stroke="#555" stroke-width="1.0"/><path d="M871.9 591.2 l3.8 3.8 m0 -3.8 l-3.8 3.8" stroke="#555" stroke-width="0.9"/><rect x="923.7" y="565.9" width="23.8" height="78" fill="#565656"/><circle cx="935.6" cy="639.2" r="4.1" fill="#3a3a3a"/><path d="M929.4 549.4 C929.4 555.4 933.5 557.4 933.5 563.4 L933.5 576.4" fill="none" stroke="#f3a52a" stroke-width="2"/><path d="M941.8 549.4 C941.8 555.4 937.7 557.4 937.7 563.4 L937.7 576.4" fill="none" stroke="#d4601c" stroke-width="2"/><line x1="935.6" y1="549.4" x2="935.6" y2="576.4" stroke="#dc3a1e" stroke-width="2.3"/><rect x="933.8" y="561.4" width="3" height="14" fill="#f4701a" opacity="0.75"/><rect x="926.6" y="534.4" width="18" height="16.2" fill="#808080"/><rect x="927.7" y="537.0" width="3.4" height="12" fill="#6c6c6c"/><rect x="928.8" y="536.8" width="1.3" height="2.6" fill="#e6e6e6"/><rect x="933.9" y="537.0" width="3.4" height="12" fill="#6c6c6c"/><rect x="935.0" y="536.8" width="1.3" height="2.6" fill="#e6e6e6"/><rect x="940.1" y="537.0" width="3.4" height="12" fill="#6c6c6c"/><rect x="941.2" y="536.8" width="1.3" height="2.6" fill="#e6e6e6"/><rect x="921.5" y="576.4" width="28.2" height="57" rx="3" fill="#6b6b6b"/><circle cx="935.6" cy="593.1" r="11.6" fill="#888888"/><circle cx="935.6" cy="603.9" r="6.8" fill="#828282"/><path d="M935.6 586.9 L969.6 588.8 A4.3 4.3 0 0 1 969.6 597.4 L935.6 599.3 A6.2 6.2 0 0 1 935.6 586.9 Z" fill="#dcdcdc"/><circle cx="949.3" cy="593.1" r="1.6" fill="#7a7a7a"/><circle cx="954.6" cy="593.1" r="1.6" fill="#222"/><circle cx="959.9" cy="593.1" r="1.6" fill="#222"/><circle cx="965.3" cy="593.1" r="1.6" fill="#222"/><circle cx="935.6" cy="593.1" r="5.0" fill="#dedede" stroke="#555" stroke-width="1.0"/><path d="M933.7 591.2 l3.8 3.8 m0 -3.8 l-3.8 3.8" stroke="#555" stroke-width="0.9"/><rect x="985.7" y="565.9" width="23.8" height="78" fill="#565656"/><circle cx="997.6" cy="639.2" r="4.1" fill="#3a3a3a"/><path d="M991.4 549.4 C991.4 555.4 995.5 557.4 995.5 563.4 L995.5 576.4" fill="none" stroke="#f3a52a" stroke-width="2"/><path d="M1003.8 549.4 C1003.8 555.4 999.7 557.4 999.7 563.4 L999.7 576.4" fill="none" stroke="#d4601c" stroke-width="2"/><line x1="997.6" y1="549.4" x2="997.6" y2="576.4" stroke="#dc3a1e" stroke-width="2.3"/><rect x="995.8" y="561.4" width="3" height="14" fill="#f4701a" opacity="0.75"/><rect x="988.6" y="534.4" width="18" height="16.2" fill="#808080"/><rect x="989.7" y="537.0" width="3.4" height="12" fill="#6c6c6c"/><rect x="990.8" y="536.8" width="1.3" height="2.6" fill="#e6e6e6"/><rect x="995.9" y="537.0" width="3.4" height="12" fill="#6c6c6c"/><rect x="997.0" y="536.8" width="1.3" height="2.6" fill="#e6e6e6"/><rect x="1002.1" y="537.0" width="3.4" height="12" fill="#6c6c6c"/><rect x="1003.2" y="536.8" width="1.3" height="2.6" fill="#e6e6e6"/><rect x="983.5" y="576.4" width="28.2" height="57" rx="3" fill="#6b6b6b"/><circle cx="997.6" cy="593.1" r="11.6" fill="#888888"/><circle cx="997.6" cy="603.9" r="6.8" fill="#828282"/><path d="M997.6 586.9 L1031.6 588.8 A4.3 4.3 0 0 1 1031.6 597.4 L997.6 599.3 A6.2 6.2 0 0 1 997.6 586.9 Z" fill="#dcdcdc"/><circle cx="1011.3" cy="593.1" r="1.6" fill="#7a7a7a"/><circle cx="1016.6" cy="593.1" r="1.6" fill="#222"/><circle cx="1021.9" cy="593.1" r="1.6" fill="#222"/><circle cx="1027.3" cy="593.1" r="1.6" fill="#222"/><circle cx="997.6" cy="593.1" r="5.0" fill="#dedede" stroke="#555" stroke-width="1.0"/><path d="M995.7 591.2 l3.8 3.8 m0 -3.8 l-3.8 3.8" stroke="#555" stroke-width="0.9"/><rect x="1072.4" y="565.9" width="23.8" height="78" fill="#565656"/><circle cx="1084.3" cy="639.2" r="4.1" fill="#3a3a3a"/><path d="M1078.1 549.4 C1078.1 555.4 1082.2 557.4 1082.2 563.4 L1082.2 576.4" fill="none" stroke="#f3a52a" stroke-width="2"/><path d="M1090.5 549.4 C1090.5 555.4 1086.4 557.4 1086.4 563.4 L1086.4 576.4" fill="none" stroke="#d4601c" stroke-width="2"/><line x1="1084.3" y1="549.4" x2="1084.3" y2="576.4" stroke="#dc3a1e" stroke-width="2.3"/><rect x="1082.5" y="561.4" width="3" height="14" fill="#f4701a" opacity="0.75"/><rect x="1075.3" y="534.4" width="18" height="16.2" fill="#808080"/><rect x="1076.4" y="537.0" width="3.4" height="12" fill="#6c6c6c"/><rect x="1077.4" y="536.8" width="1.3" height="2.6" fill="#e6e6e6"/><rect x="1082.6" y="537.0" width="3.4" height="12" fill="#6c6c6c"/><rect x="1083.6" y="536.8" width="1.3" height="2.6" fill="#e6e6e6"/><rect x="1088.8" y="537.0" width="3.4" height="12" fill="#6c6c6c"/><rect x="1089.8" y="536.8" width="1.3" height="2.6" fill="#e6e6e6"/><rect x="1070.2" y="576.4" width="28.2" height="57" rx="3" fill="#6b6b6b"/><circle cx="1084.3" cy="593.1" r="11.6" fill="#888888"/><circle cx="1084.3" cy="603.9" r="6.8" fill="#828282"/><path d="M1084.3 586.9 L1118.3 588.8 A4.3 4.3 0 0 1 1118.3 597.4 L1084.3 599.3 A6.2 6.2 0 0 1 1084.3 586.9 Z" fill="#dcdcdc"/><circle cx="1098.0" cy="593.1" r="1.6" fill="#7a7a7a"/><circle cx="1103.3" cy="593.1" r="1.6" fill="#222"/><circle cx="1108.6" cy="593.1" r="1.6" fill="#222"/><circle cx="1114.0" cy="593.1" r="1.6" fill="#222"/><circle cx="1084.3" cy="593.1" r="5.0" fill="#dedede" stroke="#555" stroke-width="1.0"/><path d="M1082.4 591.2 l3.8 3.8 m0 -3.8 l-3.8 3.8" stroke="#555" stroke-width="0.9"/><rect x="1134.6" y="565.9" width="23.8" height="78" fill="#565656"/><circle cx="1146.5" cy="639.2" r="4.1" fill="#3a3a3a"/><path d="M1140.3 549.4 C1140.3 555.4 1144.4 557.4 1144.4 563.4 L1144.4 576.4" fill="none" stroke="#f3a52a" stroke-width="2"/><path d="M1152.7 549.4 C1152.7 555.4 1148.6 557.4 1148.6 563.4 L1148.6 576.4" fill="none" stroke="#d4601c" stroke-width="2"/><line x1="1146.5" y1="549.4" x2="1146.5" y2="576.4" stroke="#dc3a1e" stroke-width="2.3"/><rect x="1144.7" y="561.4" width="3" height="14" fill="#f4701a" opacity="0.75"/><rect x="1137.5" y="534.4" width="18" height="16.2" fill="#808080"/><rect x="1138.6" y="537.0" width="3.4" height="12" fill="#6c6c6c"/><rect x="1139.6" y="536.8" width="1.3" height="2.6" fill="#e6e6e6"/><rect x="1144.8" y="537.0" width="3.4" height="12" fill="#6c6c6c"/><rect x="1145.8" y="536.8" width="1.3" height="2.6" fill="#e6e6e6"/><rect x="1151.0" y="537.0" width="3.4" height="12" fill="#6c6c6c"/><rect x="1152.0" y="536.8" width="1.3" height="2.6" fill="#e6e6e6"/><rect x="1132.4" y="576.4" width="28.2" height="57" rx="3" fill="#6b6b6b"/><circle cx="1146.5" cy="593.1" r="11.6" fill="#888888"/><circle cx="1146.5" cy="603.9" r="6.8" fill="#828282"/><path d="M1146.5 586.9 L1180.5 588.8 A4.3 4.3 0 0 1 1180.5 597.4 L1146.5 599.3 A6.2 6.2 0 0 1 1146.5 586.9 Z" fill="#dcdcdc"/><circle cx="1160.2" cy="593.1" r="1.6" fill="#7a7a7a"/><circle cx="1165.5" cy="593.1" r="1.6" fill="#222"/><circle cx="1170.8" cy="593.1" r="1.6" fill="#222"/><circle cx="1176.2" cy="593.1" r="1.6" fill="#222"/><circle cx="1146.5" cy="593.1" r="5.0" fill="#dedede" stroke="#555" stroke-width="1.0"/><path d="M1144.6 591.2 l3.8 3.8 m0 -3.8 l-3.8 3.8" stroke="#555" stroke-width="0.9"/><rect x="1196.4" y="565.9" width="23.8" height="78" fill="#565656"/><circle cx="1208.3" cy="639.2" r="4.1" fill="#3a3a3a"/><path d="M1202.1 549.4 C1202.1 555.4 1206.2 557.4 1206.2 563.4 L1206.2 576.4" fill="none" stroke="#f3a52a" stroke-width="2"/><path d="M1214.5 549.4 C1214.5 555.4 1210.4 557.4 1210.4 563.4 L1210.4 576.4" fill="none" stroke="#d4601c" stroke-width="2"/><line x1="1208.3" y1="549.4" x2="1208.3" y2="576.4" stroke="#dc3a1e" stroke-width="2.3"/><rect x="1206.5" y="561.4" width="3" height="14" fill="#f4701a" opacity="0.75"/><rect x="1199.3" y="534.4" width="18" height="16.2" fill="#808080"/><rect x="1200.4" y="537.0" width="3.4" height="12" fill="#6c6c6c"/><rect x="1201.4" y="536.8" width="1.3" height="2.6" fill="#e6e6e6"/><rect x="1206.6" y="537.0" width="3.4" height="12" fill="#6c6c6c"/><rect x="1207.6" y="536.8" width="1.3" height="2.6" fill="#e6e6e6"/><rect x="1212.8" y="537.0" width="3.4" height="12" fill="#6c6c6c"/><rect x="1213.8" y="536.8" width="1.3" height="2.6" fill="#e6e6e6"/><rect x="1194.2" y="576.4" width="28.2" height="57" rx="3" fill="#6b6b6b"/><circle cx="1208.3" cy="593.1" r="11.6" fill="#888888"/><circle cx="1208.3" cy="603.9" r="6.8" fill="#828282"/><path d="M1208.3 586.9 L1242.3 588.8 A4.3 4.3 0 0 1 1242.3 597.4 L1208.3 599.3 A6.2 6.2 0 0 1 1208.3 586.9 Z" fill="#dcdcdc"/><circle cx="1222.0" cy="593.1" r="1.6" fill="#7a7a7a"/><circle cx="1227.3" cy="593.1" r="1.6" fill="#222"/><circle cx="1232.6" cy="593.1" r="1.6" fill="#222"/><circle cx="1238.0" cy="593.1" r="1.6" fill="#222"/><circle cx="1208.3" cy="593.1" r="5.0" fill="#dedede" stroke="#555" stroke-width="1.0"/><path d="M1206.4 591.2 l3.8 3.8 m0 -3.8 l-3.8 3.8" stroke="#555" stroke-width="0.9"/><rect x="1294.9" y="565.9" width="23.8" height="78" fill="#565656"/><circle cx="1306.8" cy="639.2" r="4.1" fill="#3a3a3a"/><path d="M1300.6 549.4 C1300.6 555.4 1304.7 557.4 1304.7 563.4 L1304.7 576.4" fill="none" stroke="#f3a52a" stroke-width="2"/><path d="M1313.0 549.4 C1313.0 555.4 1308.9 557.4 1308.9 563.4 L1308.9 576.4" fill="none" stroke="#d4601c" stroke-width="2"/><line x1="1306.8" y1="549.4" x2="1306.8" y2="576.4" stroke="#dc3a1e" stroke-width="2.3"/><rect x="1305.0" y="561.4" width="3" height="14" fill="#f4701a" opacity="0.75"/><rect x="1297.8" y="534.4" width="18" height="16.2" fill="#808080"/><rect x="1298.9" y="537.0" width="3.4" height="12" fill="#6c6c6c"/><rect x="1299.9" y="536.8" width="1.3" height="2.6" fill="#e6e6e6"/><rect x="1305.1" y="537.0" width="3.4" height="12" fill="#6c6c6c"/><rect x="1306.1" y="536.8" width="1.3" height="2.6" fill="#e6e6e6"/><rect x="1311.3" y="537.0" width="3.4" height="12" fill="#6c6c6c"/><rect x="1312.3" y="536.8" width="1.3" height="2.6" fill="#e6e6e6"/><rect x="1292.7" y="576.4" width="28.2" height="57" rx="3" fill="#6b6b6b"/><circle cx="1306.8" cy="593.1" r="11.6" fill="#888888"/><circle cx="1306.8" cy="603.9" r="6.8" fill="#828282"/><path d="M1306.8 586.9 L1340.8 588.8 A4.3 4.3 0 0 1 1340.8 597.4 L1306.8 599.3 A6.2 6.2 0 0 1 1306.8 586.9 Z" fill="#dcdcdc"/><circle cx="1320.5" cy="593.1" r="1.6" fill="#7a7a7a"/><circle cx="1325.8" cy="593.1" r="1.6" fill="#222"/><circle cx="1331.1" cy="593.1" r="1.6" fill="#222"/><circle cx="1336.5" cy="593.1" r="1.6" fill="#222"/><circle cx="1306.8" cy="593.1" r="5.0" fill="#dedede" stroke="#555" stroke-width="1.0"/><path d="M1304.9 591.2 l3.8 3.8 m0 -3.8 l-3.8 3.8" stroke="#555" stroke-width="0.9"/><rect x="966.9" y="695.7" width="23.8" height="78" fill="#565656"/><circle cx="978.8" cy="769.0" r="4.1" fill="#3a3a3a"/><path d="M972.6 679.2 C972.6 685.2 976.7 687.2 976.7 693.2 L976.7 706.2" fill="none" stroke="#f3a52a" stroke-width="2"/><path d="M985.0 679.2 C985.0 685.2 980.9 687.2 980.9 693.2 L980.9 706.2" fill="none" stroke="#d4601c" stroke-width="2"/><line x1="978.8" y1="679.2" x2="978.8" y2="706.2" stroke="#dc3a1e" stroke-width="2.3"/><rect x="977.0" y="691.2" width="3" height="14" fill="#f4701a" opacity="0.75"/><rect x="969.8" y="664.2" width="18" height="16.2" fill="#808080"/><rect x="970.9" y="666.8" width="3.4" height="12" fill="#6c6c6c"/><rect x="971.9" y="666.6" width="1.3" height="2.6" fill="#e6e6e6"/><rect x="977.1" y="666.8" width="3.4" height="12" fill="#6c6c6c"/><rect x="978.1" y="666.6" width="1.3" height="2.6" fill="#e6e6e6"/><rect x="983.3" y="666.8" width="3.4" height="12" fill="#6c6c6c"/><rect x="984.4" y="666.6" width="1.3" height="2.6" fill="#e6e6e6"/><rect x="964.7" y="706.2" width="28.2" height="57" rx="3" fill="#6b6b6b"/><circle cx="978.8" cy="722.9" r="11.6" fill="#888888"/><path d="M985.0 722.9 L983.1 756.3 A4.3 4.3 0 0 1 974.5 756.3 L972.6 722.9 A6.2 6.2 0 0 1 985.0 722.9 Z" fill="#dcdcdc"/><circle cx="978.8" cy="736.5" r="1.6" fill="#7a7a7a"/><circle cx="978.8" cy="742.1" r="1.6" fill="#505050"/><circle cx="978.8" cy="747.3" r="1.6" fill="#505050"/><circle cx="978.8" cy="752.9" r="1.6" fill="#505050"/><circle cx="978.8" cy="722.9" r="5.0" fill="#dedede" stroke="#555" stroke-width="1.0"/><path d="M976.9 721.0 l3.8 3.8 m0 -3.8 l-3.8 3.8" stroke="#555" stroke-width="0.9"/><rect x="1097.5" y="695.7" width="23.8" height="78" fill="#565656"/><circle cx="1109.4" cy="769.0" r="4.1" fill="#3a3a3a"/><path d="M1103.2 679.2 C1103.2 685.2 1107.3 687.2 1107.3 693.2 L1107.3 706.2" fill="none" stroke="#f3a52a" stroke-width="2"/><path d="M1115.6 679.2 C1115.6 685.2 1111.5 687.2 1111.5 693.2 L1111.5 706.2" fill="none" stroke="#d4601c" stroke-width="2"/><line x1="1109.4" y1="679.2" x2="1109.4" y2="706.2" stroke="#dc3a1e" stroke-width="2.3"/><rect x="1107.6" y="691.2" width="3" height="14" fill="#f4701a" opacity="0.75"/><rect x="1100.4" y="664.2" width="18" height="16.2" fill="#808080"/><rect x="1101.5" y="666.8" width="3.4" height="12" fill="#6c6c6c"/><rect x="1102.5" y="666.6" width="1.3" height="2.6" fill="#e6e6e6"/><rect x="1107.7" y="666.8" width="3.4" height="12" fill="#6c6c6c"/><rect x="1108.8" y="666.6" width="1.3" height="2.6" fill="#e6e6e6"/><rect x="1113.9" y="666.8" width="3.4" height="12" fill="#6c6c6c"/><rect x="1115.0" y="666.6" width="1.3" height="2.6" fill="#e6e6e6"/><rect x="1095.3" y="706.2" width="28.2" height="57" rx="3" fill="#6b6b6b"/><circle cx="1109.4" cy="722.9" r="11.6" fill="#888888"/><path d="M1115.6 722.9 L1113.7 756.3 A4.3 4.3 0 0 1 1105.1 756.3 L1103.2 722.9 A6.2 6.2 0 0 1 1115.6 722.9 Z" fill="#dcdcdc"/><circle cx="1109.4" cy="736.5" r="1.6" fill="#7a7a7a"/><circle cx="1109.4" cy="742.1" r="1.6" fill="#505050"/><circle cx="1109.4" cy="747.3" r="1.6" fill="#505050"/><circle cx="1109.4" cy="752.9" r="1.6" fill="#505050"/><circle cx="1109.4" cy="722.9" r="5.0" fill="#dedede" stroke="#555" stroke-width="1.0"/><path d="M1107.5 721.0 l3.8 3.8 m0 -3.8 l-3.8 3.8" stroke="#555" stroke-width="0.9"/><rect x="1246.0" y="689.7" width="23.8" height="78" fill="#565656"/><circle cx="1257.9" cy="763.0" r="4.1" fill="#3a3a3a"/><path d="M1251.7 673.2 C1251.7 679.2 1255.8 681.2 1255.8 687.2 L1255.8 700.2" fill="none" stroke="#f3a52a" stroke-width="2"/><path d="M1264.1 673.2 C1264.1 679.2 1260.0 681.2 1260.0 687.2 L1260.0 700.2" fill="none" stroke="#d4601c" stroke-width="2"/><line x1="1257.9" y1="673.2" x2="1257.9" y2="700.2" stroke="#dc3a1e" stroke-width="2.3"/><rect x="1256.1" y="685.2" width="3" height="14" fill="#f4701a" opacity="0.75"/><rect x="1248.9" y="658.2" width="18" height="16.2" fill="#808080"/><rect x="1250.0" y="660.8" width="3.4" height="12" fill="#6c6c6c"/><rect x="1251.0" y="660.6" width="1.3" height="2.6" fill="#e6e6e6"/><rect x="1256.2" y="660.8" width="3.4" height="12" fill="#6c6c6c"/><rect x="1257.2" y="660.6" width="1.3" height="2.6" fill="#e6e6e6"/><rect x="1262.4" y="660.8" width="3.4" height="12" fill="#6c6c6c"/><rect x="1263.5" y="660.6" width="1.3" height="2.6" fill="#e6e6e6"/><rect x="1243.8" y="700.2" width="28.2" height="57" rx="3" fill="#6b6b6b"/><circle cx="1257.9" cy="716.9" r="11.6" fill="#888888"/><path d="M1264.1 716.9 L1262.2 750.3 A4.3 4.3 0 0 1 1253.6 750.3 L1251.7 716.9 A6.2 6.2 0 0 1 1264.1 716.9 Z" fill="#dcdcdc"/><circle cx="1257.9" cy="730.5" r="1.6" fill="#7a7a7a"/><circle cx="1257.9" cy="736.1" r="1.6" fill="#505050"/><circle cx="1257.9" cy="741.3" r="1.6" fill="#505050"/><circle cx="1257.9" cy="746.9" r="1.6" fill="#505050"/><circle cx="1257.9" cy="716.9" r="5.0" fill="#dedede" stroke="#555" stroke-width="1.0"/><path d="M1256.0 715.0 l3.8 3.8 m0 -3.8 l-3.8 3.8" stroke="#555" stroke-width="0.9"/><path d="M1004.40 342.50 L1004.40 339.20 Q1004.40 337.00 1006.60 337.00 L1034.80 337.00" fill="none" stroke="#3a8a21" stroke-width="2.0" stroke-linejoin="round"/><path d="M1004.40 354.90 L1014.20 354.90 Q1016.40 354.90 1016.40 352.70 L1016.40 345.10 Q1016.40 342.90 1018.60 342.90 L1041.02 342.90" fill="none" stroke="#3a8a21" stroke-width="2.0" stroke-linejoin="round"/><path d="M1004.40 367.90 L1014.80 367.90 Q1017.00 367.90 1017.00 365.70 L1017.00 363.50 Q1017.00 361.30 1019.20 361.30 L1047.24 361.30" fill="none" stroke="#3a8a21" stroke-width="2.0" stroke-linejoin="round"/><path d="M1004.40 380.10 L1026.80 380.10 Q1029.00 380.10 1029.00 377.90 L1029.00 369.80 Q1029.00 367.60 1031.20 367.60 L1053.46 367.60" fill="none" stroke="#3a8a21" stroke-width="2.0" stroke-linejoin="round"/><path d="M1034.80 322.00 L1034.80 345.60 Q1034.80 347.80 1032.60 347.80 L1024.99 347.80 Q1022.79 347.80 1022.79 350.00 L1022.79 416.30" fill="none" stroke="#3a8a21" stroke-width="2.0" stroke-linejoin="round"/><path d="M1041.02 322.00 L1041.02 352.80 Q1041.02 355.00 1038.82 355.00 L1037.37 355.00 Q1035.17 355.00 1035.17 357.20 L1035.17 416.30" fill="none" stroke="#3a8a21" stroke-width="2.0" stroke-linejoin="round"/><path d="M1047.24 322.00 L1047.24 359.10 Q1047.24 361.30 1045.04 361.30 L1043.56 361.30 Q1041.36 361.30 1041.36 363.50 L1041.36 416.30" fill="none" stroke="#3a8a21" stroke-width="2.0" stroke-linejoin="round"/><path d="M1053.46 322.00 L1053.46 365.40 Q1053.46 367.60 1051.26 367.60 L1049.75 367.60 Q1047.55 367.60 1047.55 369.80 L1047.55 416.30" fill="none" stroke="#3a8a21" stroke-width="2.0" stroke-linejoin="round"/><path d="M1059.68 322.00 L1059.68 371.80 Q1059.68 374.00 1057.48 374.00 L1055.94 374.00 Q1053.74 374.00 1053.74 376.20 L1053.74 416.30" fill="none" stroke="#3a8a21" stroke-width="2.0" stroke-linejoin="round"/><path d="M1065.90 322.00 L1066.12 416.30" fill="none" stroke="#3a8a21" stroke-width="2.0" stroke-linejoin="round"/><path d="M1072.12 322.00 L1072.31 416.30" fill="none" stroke="#3a8a21" stroke-width="2.0" stroke-linejoin="round"/><path d="M1033.2 324.0 L1036.2 321.0" stroke="#161616" stroke-width="1.7" stroke-linecap="round"/><path d="M1039.4 324.0 L1042.4 321.0" stroke="#161616" stroke-width="1.7" stroke-linecap="round"/><path d="M1045.6 324.0 L1048.6 321.0" stroke="#161616" stroke-width="1.7" stroke-linecap="round"/><path d="M1051.9 324.0 L1054.9 321.0" stroke="#161616" stroke-width="1.7" stroke-linecap="round"/><path d="M1058.1 324.0 L1061.1 321.0" stroke="#161616" stroke-width="1.7" stroke-linecap="round"/><path d="M1064.3 324.0 L1067.3 321.0" stroke="#161616" stroke-width="1.7" stroke-linecap="round"/><path d="M1070.5 324.0 L1073.5 321.0" stroke="#161616" stroke-width="1.7" stroke-linecap="round"/><path d="M973.27 462.10 L973.27 476.60 Q973.27 478.80 971.07 478.80 L869.80 478.80 Q867.60 478.80 867.60 481.00 L867.60 535.20" fill="none" stroke="#3a8a21" stroke-width="2.0" stroke-linejoin="round"/><path d="M979.46 462.10 L979.46 494.80 Q979.46 497.00 977.26 497.00 L931.60 497.00 Q929.40 497.00 929.40 499.20 L929.40 535.20" fill="none" stroke="#3a8a21" stroke-width="2.0" stroke-linejoin="round"/><path d="M985.65 462.10 L985.65 518.60 Q985.65 520.80 987.85 520.80 L989.40 520.80 Q991.60 520.80 991.60 523.00 L991.60 535.20" fill="none" stroke="#3a8a21" stroke-width="2.0" stroke-linejoin="round"/><path d="M991.84 462.10 L991.84 500.80 Q991.84 503.00 994.04 503.00 L1076.20 503.00 Q1078.40 503.00 1078.40 505.20 L1078.40 535.20" fill="none" stroke="#3a8a21" stroke-width="2.0" stroke-linejoin="round"/><path d="M1004.22 462.10 L1004.22 495.00 Q1004.22 497.20 1006.42 497.20 L1138.00 497.20 Q1140.20 497.20 1140.20 499.40 L1140.20 535.20" fill="none" stroke="#3a8a21" stroke-width="2.0" stroke-linejoin="round"/><path d="M1010.41 462.10 L1010.41 482.80 Q1010.41 485.00 1012.61 485.00 L1200.20 485.00 Q1202.40 485.00 1202.40 487.20 L1202.40 535.20" fill="none" stroke="#3a8a21" stroke-width="2.0" stroke-linejoin="round"/><path d="M1016.60 462.10 L1016.60 476.70 Q1016.60 478.90 1018.80 478.90 L1298.80 478.90 Q1301.00 478.90 1301.00 481.10 L1301.00 535.20" fill="none" stroke="#3a8a21" stroke-width="2.0" stroke-linejoin="round"/><path d="M967.00 341.50 L967.00 389.30 Q967.00 391.50 969.20 391.50 L977.26 391.50 Q979.46 391.50 979.46 393.70 L979.46 416.30" fill="none" stroke="#c82323" stroke-width="2.3" stroke-linejoin="round"/><path d="M874.00 535.20 L874.00 512.20 Q874.00 510.00 876.20 510.00 L1304.60 510.00 Q1306.80 510.00 1306.80 512.20 L1306.80 535.20" fill="none" stroke="#c82323" stroke-width="3.0" stroke-linejoin="round"/><path d="M997.60 510.00 L997.60 535.20" fill="none" stroke="#c82323" stroke-width="3.0" stroke-linejoin="round"/><path d="M1084.30 510.00 L1084.30 535.20" fill="none" stroke="#c82323" stroke-width="3.0" stroke-linejoin="round"/><path d="M1146.50 510.00 L1146.50 535.20" fill="none" stroke="#c82323" stroke-width="3.0" stroke-linejoin="round"/><path d="M1208.30 510.00 L1208.30 535.20" fill="none" stroke="#c82323" stroke-width="3.0" stroke-linejoin="round"/><path d="M967.08 462.10 L967.08 489.00 Q967.08 491.20 964.88 491.20 L882.30 491.20 Q880.10 491.20 880.10 493.40 L880.10 535.20" fill="none" stroke="#0c0c0c" stroke-width="2.1" stroke-linejoin="round"/><path d="M941.90 491.20 L941.90 535.20" fill="none" stroke="#0c0c0c" stroke-width="2.1" stroke-linejoin="round"/><path d="M998.03 462.10 L998.03 494.40 Q998.03 496.60 1000.23 496.60 L1001.70 496.60 Q1003.90 496.60 1003.90 498.80 L1003.90 535.20" fill="none" stroke="#0c0c0c" stroke-width="2.1" stroke-linejoin="round"/><path d="M998.03 491.20 L1310.90 491.20 Q1313.10 491.20 1313.10 493.40 L1313.10 535.20" fill="none" stroke="#0c0c0c" stroke-width="2.1" stroke-linejoin="round"/><path d="M1028.98 462.10 L1028.98 489.70 Q1028.98 491.20 1030.48 491.20 L1031.98 491.20" fill="none" stroke="#0c0c0c" stroke-width="2.1" stroke-linejoin="round"/><path d="M1059.93 462.10 L1059.93 489.70 Q1059.93 491.20 1061.43 491.20 L1062.93 491.20" fill="none" stroke="#0c0c0c" stroke-width="2.1" stroke-linejoin="round"/><path d="M1090.60 491.20 L1090.60 535.20" fill="none" stroke="#0c0c0c" stroke-width="2.1" stroke-linejoin="round"/><path d="M1152.80 491.20 L1152.80 535.20" fill="none" stroke="#0c0c0c" stroke-width="2.1" stroke-linejoin="round"/><path d="M1214.60 491.20 L1214.60 535.20" fill="none" stroke="#0c0c0c" stroke-width="2.1" stroke-linejoin="round"/><path d="M954.70 416.30 L937.80 416.30 Q935.60 416.30 935.60 418.50 L935.60 535.20" fill="none" stroke="#c82323" stroke-width="3.0" stroke-linejoin="round"/></svg>
<div class="serial"></div>
<div class="stext">Type in a note!</div>
</body></html>
